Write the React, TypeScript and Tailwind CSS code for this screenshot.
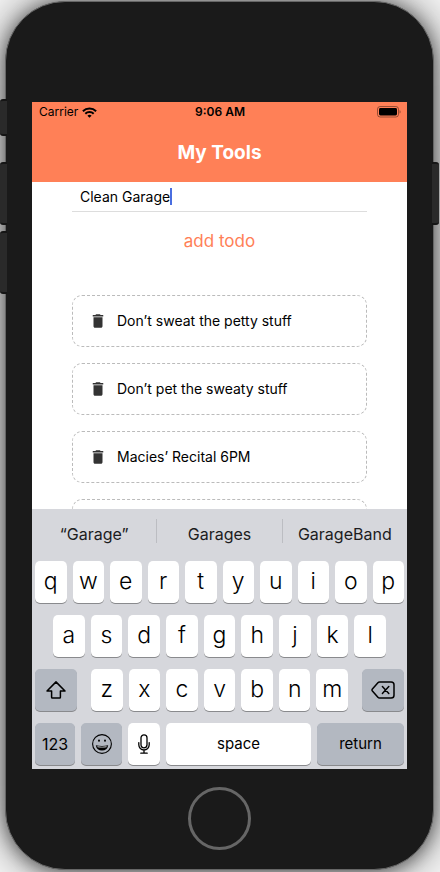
import type { ReactNode } from "react";
import { MdDelete } from "react-icons/md";

const todos = ["Don’t sweat the petty stuff", "Don’t pet the sweaty stuff", "Macies’ Recital 6PM", ""];

function WifiIcon() {
  return (
    <svg width="15" height="11" viewBox="0 0 15 11" fill="none" stroke="#000" strokeWidth="2" aria-hidden="true">
      <path d="M0.9 4.2 A9.4 9.4 0 0 1 14.1 4.2" />
      <path d="M3.3 6.7 A6 6 0 0 1 11.7 6.7" />
      <path d="M7.5 10.8 L5.4 8.7 A3 3 0 0 1 9.6 8.7 Z" fill="#000" stroke="none" />
    </svg>
  );
}

function BatteryIcon() {
  return (
    <svg width="24" height="12" viewBox="0 0 24 12" aria-hidden="true">
      <rect x="0.5" y="0.5" width="21" height="10.5" rx="2.6" fill="none" stroke="#000" strokeOpacity="0.4" />
      <rect x="2" y="2" width="18" height="7.5" rx="1.4" fill="#000" />
      <path d="M22.5 3.9 C24 4.4 24 7.1 22.5 7.6 Z" fill="#000" fillOpacity="0.4" />
    </svg>
  );
}

function ShiftIcon() {
  return (
    <svg width="20" height="18" viewBox="0 0 20 18" fill="none" stroke="#000" strokeWidth="1.5" strokeLinejoin="round" aria-hidden="true">
      <path d="M10 0.9 L19 10 H14.4 V16.2 Q14.4 17 13.6 17 H6.4 Q5.6 17 5.6 16.2 V10 H1 Z" />
    </svg>
  );
}

function DeleteIcon() {
  return (
    <svg width="24" height="18" viewBox="0 0 24 18" fill="none" stroke="#000" strokeWidth="1.5" strokeLinejoin="round" strokeLinecap="round" aria-hidden="true">
      <path d="M8.6 1 H20.2 Q23 1 23 3.8 V14.2 Q23 17 20.2 17 H8.6 Q7.6 17 6.9 16.2 L1.4 10 Q0.6 9 1.4 8 L6.9 1.8 Q7.6 1 8.6 1 Z" />
      <path d="M11.4 5.6 L17.8 12.4 M17.8 5.6 L11.4 12.4" />
    </svg>
  );
}

function EmojiIcon() {
  return (
    <svg width="20" height="20" viewBox="0 0 20 20" aria-hidden="true">
      <circle cx="10" cy="10" r="9.4" fill="none" stroke="#000" strokeWidth="1.1" />
      <ellipse cx="7" cy="6.6" rx="1" ry="1.2" />
      <ellipse cx="13" cy="6.6" rx="1" ry="1.2" />
      <path d="M3.8 11.2 Q10 12.7 16.2 11.2 Q15.2 16.6 10 16.6 Q4.8 16.6 3.8 11.2 Z" />
      <path d="M5.2 12.2 Q10 13.1 14.8 12.2 L14.4 13.2 Q10 14 5.6 13.2 Z" fill="#d0d3d8" />
    </svg>
  );
}

function MicIcon() {
  return (
    <svg width="12" height="20" viewBox="0 0 12 20" fill="none" stroke="#000" strokeWidth="1.3" strokeLinecap="round" aria-hidden="true">
      <rect x="3" y="0.8" width="6" height="13" rx="3" />
      <path d="M0.8 8.6 V10.8 A5.2 5.2 0 0 0 11.2 10.8 V8.6 M6 16 V19 M2.8 19.2 H9.2" />
    </svg>
  );
}

function Key({ label }: { label: string }) {
  return (
    <button
      type="button"
      className="flex h-[42px] min-w-0 flex-1 items-center justify-center rounded-[5px] bg-white pb-px text-[23px] font-light text-black shadow-[0_1px_0_#898a8d]"
    >
      {label}
    </button>
  );
}

function ActionKey({ label, className, children }: { label: string; className: string; children?: ReactNode }) {
  return (
    <button
      type="button"
      aria-label={label}
      className={`flex h-[42px] items-center justify-center rounded-[5px] text-black shadow-[0_1px_0_#898a8d] ${className}`}
    >
      {children ?? label}
    </button>
  );
}

function Keyboard() {
  return (
    <div className="bg-[#d6d7dc] pb-1">
      <div className="flex h-[52px] items-start pt-[10px]">
        {["“Garage”", "Garages", "GarageBand"].map((word, i) => (
          <button
            key={word}
            type="button"
            className={`flex h-6 flex-1 basis-0 justify-center pt-[5px] text-base leading-5 text-[#1c1c1e] ${i > 0 ? "border-l border-[#bcbdc2]" : ""}`}
          >
            {word}
          </button>
        ))}
      </div>
      <div className="flex flex-col gap-3 px-[3px]">
        <div className="flex gap-[6px]">
          {"qwertyuiop".split("").map((k) => (
            <Key key={k} label={k} />
          ))}
        </div>
        <div className="flex gap-[6px] px-[18px]">
          {"asdfghjkl".split("").map((k) => (
            <Key key={k} label={k} />
          ))}
        </div>
        <div className="flex gap-[14px]">
          <ActionKey label="shift" className="w-[42px] bg-[#b3b8c1]">
            <ShiftIcon />
          </ActionKey>
          <div className="flex flex-1 gap-[6px]">
            {"zxcvbnm".split("").map((k) => (
              <Key key={k} label={k} />
            ))}
          </div>
          <ActionKey label="delete" className="w-[42px] bg-[#b3b8c1]">
            <DeleteIcon />
          </ActionKey>
        </div>
        <div className="flex gap-[6px]">
          <ActionKey label="123" className="w-10 bg-[#b3b8c1] text-base" />
          <ActionKey label="emoji" className="w-[41px] bg-[#b3b8c1]">
            <EmojiIcon />
          </ActionKey>
          <ActionKey label="dictate" className="w-8 bg-white">
            <MicIcon />
          </ActionKey>
          <ActionKey label="space" className="flex-1 bg-white text-[15px]" />
          <ActionKey label="return" className="w-[87px] bg-[#b3b8c1] text-[15px]" />
        </div>
      </div>
    </div>
  );
}

function SideButton({ className }: { className: string }) {
  return <div className={`absolute w-[7px] border-y-2 border-[#151515] bg-[#2a2a2a] ${className}`} />;
}

export default function App() {
  return (
    <div className="overflow-hidden bg-[#f4f4f4] pt-px pr-[6px] pb-[2px] pl-[5px] font-[Inter,'Liberation_Sans',sans-serif]">
      <div className="relative rounded-[60px] border border-[#666] bg-[#1a1a1a] px-[26px] pt-[100px] pb-[19px] shadow-[0_0_40px_rgba(0,0,0,0.6),0_2px_16px_rgba(0,0,0,0.4)]">
        <SideButton className="top-[97px] -left-[6px] h-[37px] rounded-l-[3px]" />
        <SideButton className="top-[160px] -left-[6px] h-[63px] rounded-l-[3px]" />
        <SideButton className="top-[229px] -left-[6px] h-[63px] rounded-l-[3px]" />
        <SideButton className="top-[160px] -right-[6px] h-[63px] rounded-r-[3px]" />

        <div className="overflow-hidden bg-white">
          <header className="bg-[#ff8057]">
            <div className="grid h-5 grid-cols-3 items-center pr-[6px] pl-[7px] text-xs text-black">
              <div className="flex items-center gap-1">
                <span>Carrier</span>
                <WifiIcon />
              </div>
              <span className="text-center font-semibold">9:06 AM</span>
              <div className="flex justify-end">
                <BatteryIcon />
              </div>
            </div>
            <h1 className="flex h-[60px] items-center justify-center pt-[3px] text-[19px] font-bold text-white">My Tools</h1>
          </header>

          <main className="h-[327px] overflow-hidden px-10">
            <div className="flex h-[30px] items-center border-b border-[#ddd] px-2">
              <input
                type="text"
                aria-label="New todo"
                defaultValue="Clean Garage"
                className="field-sizing-content text-sm text-black outline-none"
              />
              <span className="h-[17px] w-[2px] bg-[#4a6ee0]" />
            </div>
            <button type="button" className="mt-4 block h-7 w-full text-center text-[17px] text-[#ff8057]">
              add todo
            </button>
            <ul className="mt-[39px] flex flex-col gap-4">
              {todos.map((todo, i) => (
                <li key={i} className="flex h-[52px] items-center gap-[10px] rounded-[10px] border border-dashed border-[#bbb] px-4 text-sm text-black">
                  <button type="button" aria-label={`Delete todo ${i + 1}`}>
                    <MdDelete size={18} color="#333" />
                  </button>
                  {todo && <span>{todo}</span>}
                </li>
              ))}
            </ul>
          </main>

          <Keyboard />
        </div>

        <button
          type="button"
          aria-label="Home"
          className="mx-auto mt-[18px] block size-[63px] rounded-full border-[3px] border-[#666]"
        />
      </div>
    </div>
  );
}
